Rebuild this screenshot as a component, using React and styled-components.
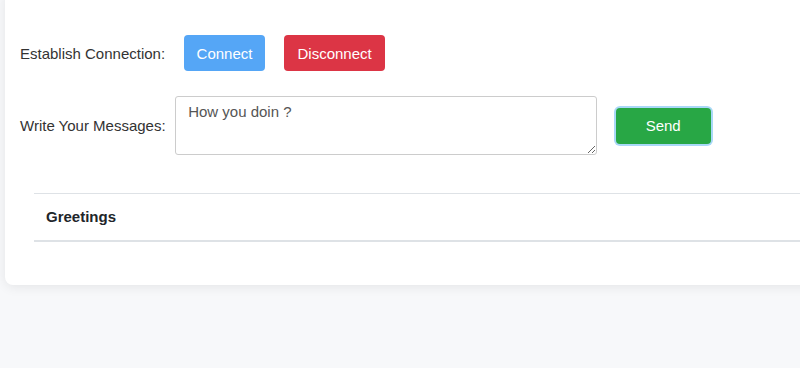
import React, { useState } from 'react'
import styled, { createGlobalStyle } from 'styled-components'

const GlobalStyle = createGlobalStyle`
  html, body {
    margin: 0;
    padding: 0;
    background: #f7f8fa;
    overflow: hidden;
    font-family: "Liberation Sans", Arial, sans-serif;
  }
`;

export default function App() {
  const [message, setMessage] = useState('How you doin ?');
  return <Page>
    <GlobalStyle />
    <Card>
      <Row>
        <Label>Establish Connection:</Label>
        <Button color="#55a6f6" pad="12.5px">Connect</Button>
        <Button color="#dc3545" pad="13.5px">Disconnect</Button>
      </Row>
      <MessageRow>
        <Label tight>Write Your Messages:</Label>
        <MessageBox value={message} onChange={e => setMessage(e.target.value)} />
        <Button color="#28a745" pad="30px" focused>Send</Button>
      </MessageRow>
      <Table>
        <thead>
          <tr>
            <HeadCell>Greetings</HeadCell>
          </tr>
        </thead>
      </Table>
    </Card>
  </Page>
}

const Page = styled.div`
  padding-left: 5px;
  height: 368px;
`;

const Card = styled.div`
  width: 920px;
  margin-top: -10px;
  padding: 45px 15px 43px;
  box-sizing: border-box;
  background: #fff;
  border-radius: 8px;
  box-shadow: 0 2px 12px rgba(0, 0, 0, 0.08);
`;

const Row = styled.div`
  display: flex;
  align-items: center;
  gap: 19px;
`;

const MessageRow = styled(Row)`
  margin-top: 25px;
  gap: 18.5px;
`;

const Label = styled.span`
  font-size: 15px;
  color: #333;
  margin-right: ${p => (p.tight ? '-9px' : '0')};
`;

const Button = styled.button`
  height: 36px;
  padding: 0 ${p => p.pad};
  border: none;
  border-radius: 4px;
  background: ${p => p.color};
  color: #fff;
  font-family: inherit;
  font-size: 15px;
  cursor: pointer;
  box-shadow: ${p => (p.focused ? '0 0 0 2px #a9d8f7' : 'none')};
`;

const MessageBox = styled.textarea`
  width: 422px;
  height: 59px;
  box-sizing: border-box;
  padding: 6px 12px;
  border: 1px solid #ccc;
  border-radius: 3px;
  font-family: inherit;
  font-size: 15px;
  color: #555;
  resize: vertical;
  outline: none;
`;

const Table = styled.table`
  margin: 38px 0 0 14px;
  width: 860px;
  border-collapse: collapse;
  border-top: 1px solid #dee2e6;
  border-bottom: 2px solid #dee2e6;
`;

const HeadCell = styled.th`
  text-align: left;
  padding: 12px;
  font-size: 15px;
  font-weight: bold;
  color: #212529;
  line-height: 22px;
`;
